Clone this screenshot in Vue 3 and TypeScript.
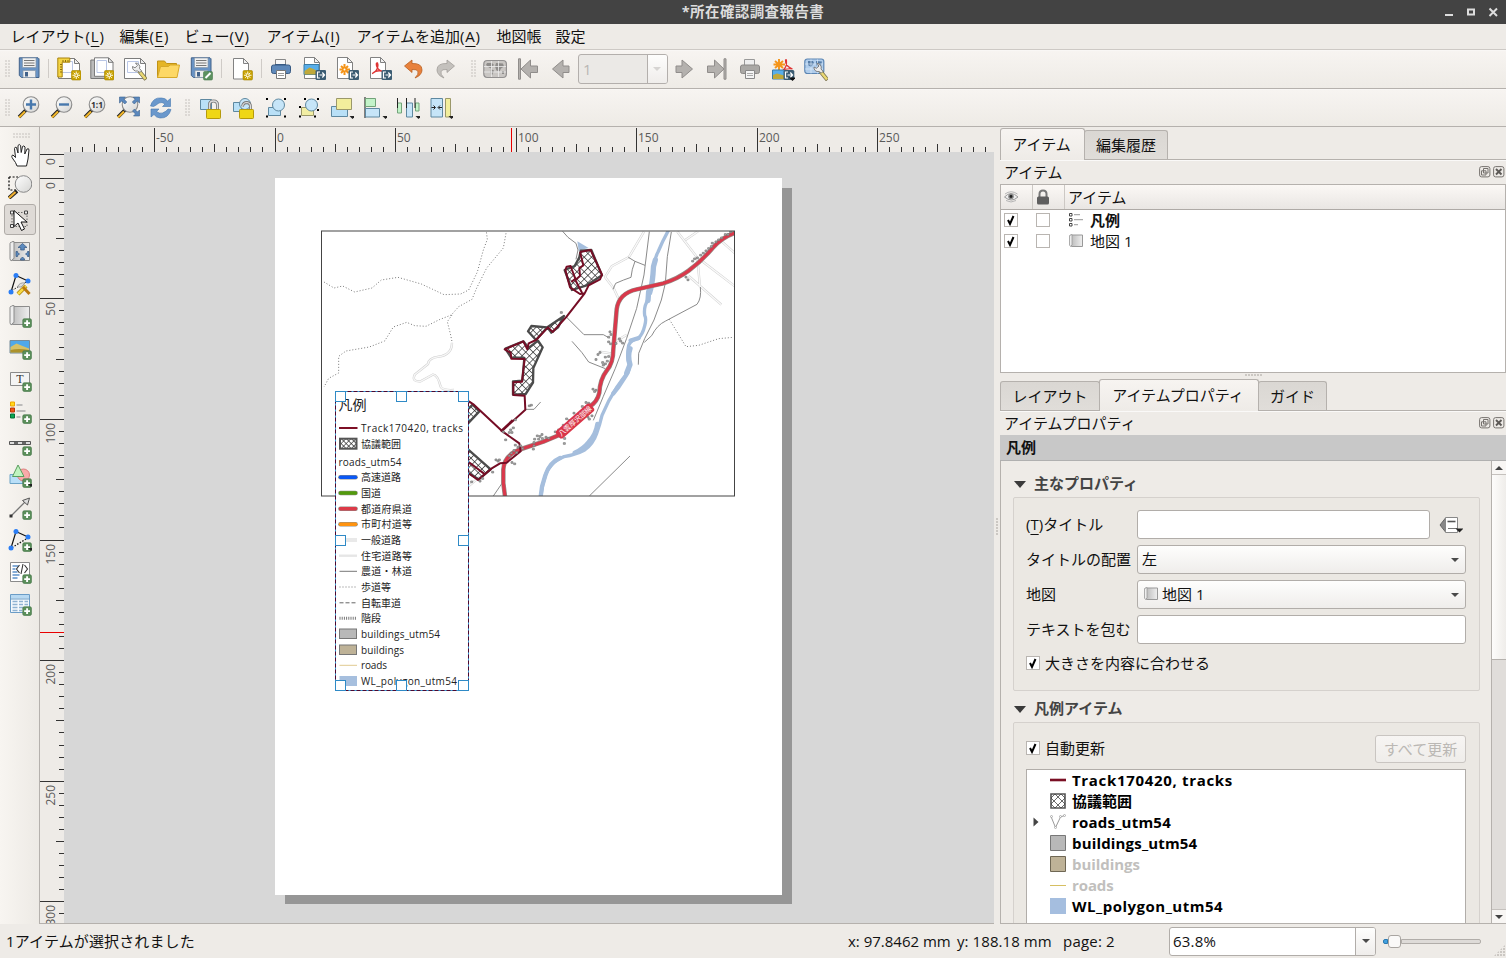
<script setup lang="ts">
interface Tool { icon?: string; kind?: 'sep' | 'grip' | 'page' }
interface Tick { pos: number; len: number; label?: string }
interface LegendRow { y: number; text: string; width: number; swatch: string; color?: string }

const menus = [
  { text: 'レイアウト', key: 'L', width: 109 },
  { text: '編集', key: 'E', width: 65 },
  { text: 'ビュー', key: 'V', width: 82 },
  { text: 'アイテム', key: 'I', width: 90 },
  { text: 'アイテムを追加', key: 'A', width: 140 },
  { text: '地図帳', key: '', width: 59 },
  { text: '設定', key: '', width: 40 },
]

const t = (icon: string): Tool => ({ icon })
const sep: Tool = { kind: 'sep' }
const grip: Tool = { kind: 'grip' }

const toolbarTop: Tool[] = [
  t('save'), sep, t('new-layout'), t('duplicate'), t('manager'), t('folder'), t('save-as'), sep,
  t('new-page'), sep, t('print'), t('export-image'), t('export-svg'), t('export-pdf'), t('undo'), t('redo'), grip,
  t('atlas'), t('first'), t('prev'), { kind: 'page' }, t('next'), t('last'), t('print-off'), t('atlas-export'), t('atlas-settings'),
]
const toolbarView: Tool[] = [
  t('zoom-in'), t('zoom-out'), t('zoom-actual'), t('zoom-full'), t('refresh'), grip,
  t('lock-items'), t('unlock-items'), t('group'), t('ungroup'), t('raise'), t('align'), t('distribute'), t('resize'),
]
const toolbox = ['pan', 'zoom', 'select', 'move-content', 'edit-nodes', 'add-map', 'add-image', 'add-label', 'add-legend',
  'add-scalebar', 'add-shape', 'add-arrow', 'add-nodes', 'add-html', 'add-table']

const hTicks: Tick[] = []
for (let i = -17; i <= 59; i++) {
  const major = i % 10 === 0
  hTicks.push({ pos: Math.floor(275 + i * 12.05), len: major ? 24 : i % 5 === 0 ? 8 : 5, label: major ? String(i * 5) : undefined })
}
const vTicks: Tick[] = []
for (let k = -2; k <= 61; k++) {
  const major = k % 10 === 0 || k === -2
  vTicks.push({ pos: Math.floor(178.2 + k * 12.06), len: major ? 24 : k % 5 === 0 ? 8 : 5, label: major ? String(Math.max(k, 0) * 5) : undefined })
}

const legend: LegendRow[] = [
  { y: 428, text: 'Track170420, tracks', width: 102, swatch: 'line', color: '#7d0f25' },
  { y: 443.7, text: '協議範囲', width: 40, swatch: 'hatch' },
  { y: 477.3, text: '高速道路', width: 40, swatch: 'road', color: '#0a58f5' },
  { y: 493, text: '国道', width: 20, swatch: 'road', color: '#529a0c' },
  { y: 508.7, text: '都道府県道', width: 51, swatch: 'road', color: '#dc3a48' },
  { y: 524.3, text: '市町村道等', width: 51, swatch: 'road', color: '#ff930f' },
  { y: 540, text: '一般道路', width: 40, swatch: 'pale', color: '#e9e9e9' },
  { y: 555.7, text: '住宅道路等', width: 51, swatch: 'pale2', color: '#e6e6e6' },
  { y: 571.3, text: '農道・林道', width: 51, swatch: 'thin', color: '#777' },
  { y: 587, text: '歩道等', width: 30, swatch: 'dots' },
  { y: 602.8, text: '自転車道', width: 40, swatch: 'dash' },
  { y: 618.3, text: '階段', width: 20, swatch: 'stairs' },
  { y: 634, text: 'buildings_utm54', width: 79, swatch: 'box', color: '#b8b8b8' },
  { y: 650, text: 'buildings', width: 43, swatch: 'box', color: '#beb297' },
  { y: 665.3, text: 'roads', width: 26, swatch: 'thin', color: '#e0ca90' },
  { y: 681, text: 'WL_polygon_utm54', width: 96, swatch: 'fill', color: '#a6bfde' },
]

const handles = [[335.5, 391.5], [396.5, 391.5], [458.5, 391.5], [335.5, 535.5], [458.5, 535.5], [335.5, 680.5], [396.5, 680.5], [458.5, 680.5]]

const houses: number[][] = [
  [812, 36], [804, 44], [796, 44], [785, 54], [776, 60], [768, 66], [757, 70], [754, 80], [746, 86], [738, 93], [730, 100], [722, 106],
  [712, 114], [704, 117], [698, 124], [678, 172], [684, 180], [450, 336], [453, 344], [446, 352], [446, 366], [452, 372], [468, 371],
  [482, 364], [488, 370], [478, 357], [420, 398], [414, 404], [408, 419], [436, 412], [446, 410], [428, 428], [436, 432], [442, 424],
  [430, 436], [399, 508], [404, 515], [408, 511], [378, 548], [386, 550], [367, 560], [396, 588], [384, 592], [388, 598], [342, 580],
  [320, 597], [328, 602], [310, 616], [296, 630], [286, 636], [314, 656], [313, 671], [266, 655], [258, 652], [246, 644], [240, 650],
  [232, 648], [236, 658], [224, 658], [222, 668], [222, 678], [220, 688], [247, 656], [160, 624], [152, 630], [156, 638], [148, 638],
  [130, 636], [137, 660], [166, 676], [174, 682], [182, 678], [188, 686], [162, 692], [154, 700], [148, 708], [170, 698], [156, 728],
  [164, 732], [108, 720], [114, 724], [118, 720], [98, 757], [68, 776], [60, 784], [35, 786], [166, 600], [208, 558], [214, 556], [304, 278],
]

const mainRoad = 'M826 38q-40 14-66 44-34 40-74 70-32 24-76 38l-80 18q-54 12-60 60l-10 120q0 42-20 64-20 26-22 66-6 28-30 42L298 645l-48 20-66 22q-52 18-54 62v40l5 40'
const pathLoop = 'M396 368q0 36-40 42-30 4-32 22l-40 32q-10 22 18 20l36-20q14-2 24 36 6 12 40 10'
const paleRoads = 'M552 35l-45 76-52 28-20 32 26 34 14 30M652 35l60 78 8 88M676 60l38-26M722 120l104 80M686 168l98 86M786 65l40 36M455 372l45-28M418 395l35 5M0 820l60-50'

const legendItems = [
  { text: 'Track170420, tracks', icon: 'sw-line', off: false, gap: 0.68 },
  { text: '協議範囲', icon: 'sw-hatch', off: false, gap: 0 },
  { text: 'roads_utm54', icon: 'sw-vector', off: false, gap: 0.22, expand: true },
  { text: 'buildings_utm54', icon: 'sw-grey', off: false, gap: 0.17 },
  { text: 'buildings', icon: 'sw-tan', off: true, gap: -0.05 },
  { text: 'roads', icon: 'sw-thin', off: true, gap: -0.1 },
  { text: 'WL_polygon_utm54', icon: 'sw-blue', off: false, gap: 0.5 },
]
</script>

<template>
  <div class="window">
    <svg class="sprites" width="0" height="0">
      <defs>
        <linearGradient id="g-lens" x1="0" y1="0" x2="1" y2="1"><stop offset="0" stop-color="#fff" /><stop offset="1" stop-color="#d4d4d2" /></linearGradient>
        <linearGradient id="g-roll" x1="0" y1="0" x2="1" y2="0"><stop offset="0" stop-color="#b9b9b9" /><stop offset="1" stop-color="#efefef" /></linearGradient>
        <pattern id="p-hatch" width="3.6" height="3.6" patternUnits="userSpaceOnUse" patternTransform="rotate(45)">
          <path d="M0 0H3.6M0 0V3.6" stroke="#222" stroke-width="1.2" fill="none" />
        </pattern>
        <pattern id="p-map" width="15.5" height="15.5" patternUnits="userSpaceOnUse" patternTransform="rotate(45)">
          <path d="M0 0H15.5M0 0V15.5" stroke="#222" stroke-width="4" fill="none" />
        </pattern>
        <g id="b-new">
          <rect x="14.5" y="13.5" width="9.500" height="9.500" rx="1.200" fill="#c8a202" stroke="#a58500" stroke-width=".6" />
          <path d="M19.250 14.500v7.500M15.500 18.250h7.500M16.700 15.700l5.100 5.100M21.800 15.700l-5.100 5.100" stroke="#fffbe0" stroke-width="1" /><circle cx="19.250" cy="18.250" r="1.400" fill="#c8a202" stroke="#fff" stroke-width=".8" />
        </g>
        <g id="b-export">
          <rect x="13.500" y="13" width="10.800" height="10" rx="1.500" fill="#3c5d73" />
          <path d="M18 15h-2.500v6H18M17.500 18h4.800M20.300 15.500l2.300 2.500-2.300 2.500" stroke="#fff" stroke-width="1.200" fill="none" />
        </g>
        <g id="b-plus">
          <rect x="14.800" y="14.800" width="8.600" height="8.600" rx="1.400" fill="#5b8f5b" stroke="#47784a" stroke-width=".7" />
          <path d="M19.100 16.200v5.800M16.200 19.100H22" stroke="#fff" stroke-width="1.900" />
        </g>
        <g id="b-drop"><path d="M17.500 19.500h6l-3 3z" fill="#222" /></g>
        <g id="s-wide"><path d="M1.500 1.500h16l5 5v15h-21z" fill="#fff" stroke="#7c7c7c" /><path d="M4.500 4.500h11v11h-11z" fill="#fdfdff" stroke="#b9c6e6" /><path d="M17.500 1.500v5h5z" fill="#eee" stroke="#7c7c7c" /></g>
        <g id="s-doc"><path d="M2.500 .5h10l5 5v16h-15z" fill="#fff" stroke="#828282" /><path d="M12.500 .5v5h5z" fill="#f1f1f1" stroke="#828282" /></g>
        <g id="s-lens">
          <path d="M9.500 13.500L2 21" stroke="#222" stroke-width="3.600" /><path d="M8 15.500L2 21.500" stroke="#f0b52a" stroke-width="2.200" />
          <circle cx="14" cy="8.500" r="7.800" fill="url(#g-lens)" stroke="#8b8b8b" stroke-width="1.100" />
        </g>
        <g id="s-wrench">
          <path d="M15 13l7 8.500" stroke="#77704c" stroke-width="4" /><path d="M15 13l6.500 8" stroke="#ead873" stroke-width="2.600" />
          <path d="M8.500 8.500a4 4 0 0 0 5 4.500l2.500 1.500 1.500-1.700-2-2.300a4 4 0 0 0-4-5.500l2 2.500-2.500 2.300z" fill="#ececec" stroke="#6a6a6a" stroke-width=".8" />
        </g>
        <g id="s-roll">
          <path d="M2.500 2.500h19v18h-17z" fill="url(#g-roll)" stroke="#8c8c8c" /><path d="M2 3.500q1.500-2.500 4-2v17q-1.500 0-2 2.200-2 .3-2-2z" fill="#eee" stroke="#8c8c8c" />
        </g>
        <g id="s-nodes"><circle cx="8" cy="3.500" r="2.500" fill="#2a7df5" /><circle cx="20" cy="9" r="2.500" fill="#2a7df5" /><circle cx="3" cy="20" r="2.500" fill="#2a7df5" /></g>
      </defs>

      <symbol id="save" viewBox="0 0 24 24">
        <path d="M3 .8h18l1 1v18.700H4.500L2.300 18.500V.8z" fill="#6993c4" stroke="#42628a" /><path d="M5.500 1h13.500v9.500H5.500z" fill="#f1f1f1" stroke="#8698aa" stroke-width=".7" /><path d="M7 3.500h10.500M7 6h10.500M7 8.500h10.500" stroke="#777" /><path d="M6 13.500h12.500v7H6z" fill="#eee" stroke="#8698aa" stroke-width=".7" /><path d="M8 15h3v4.500H8z" fill="#42628a" />
      </symbol>
      <symbol id="new-layout" viewBox="0 0 24 24"><use href="#s-wide" /><path d="M.8 1h12v4.200H5.200V20H.8z" fill="#f5d545" stroke="#a9830c" /><path d="M3 7.500h2M3 10h2M3 12.500h2M3 15h2M6 3v2M8.500 3v2M11 3v2" stroke="#8c6d0c" /><use href="#b-new" /></symbol>
      <symbol id="duplicate" viewBox="0 0 24 24"><path d="M.8 3h16v18.500h-16z" fill="#bbb" stroke="#777" /><path d="M4.500 .8h14l4.500 4.500v14h-18.500z" fill="#fff" stroke="#7c7c7c" /><path d="M7 3.500h9.500v12H7z" fill="none" stroke="#b9c6e6" /><path d="M18.500 .8v4.500H23z" fill="#eee" stroke="#777" /><use href="#b-new" /></symbol>
      <symbol id="manager" viewBox="0 0 24 24"><use href="#s-wide" /><use href="#s-wrench" x="1" y="1" /></symbol>
      <symbol id="folder" viewBox="0 0 24 24"><path d="M1.500 20.500V4h7l2 2.500h10v14z" fill="#e5b526" stroke="#c09216" /><path d="M1.500 20.500l3-11h8l1.500-1.500h9.500l-2.500 12.500z" fill="#fdd866" stroke="#d7a92a" /></symbol>
      <symbol id="save-as" viewBox="0 0 24 24"><use href="#save" width="24" height="24" /><rect x="14.500" y="14.500" width="9" height="8.500" rx="1.200" fill="#5c9160" stroke="#477a4c" stroke-width=".6" /><path d="M16.500 21l5-5" stroke="#fff" stroke-width="2" /></symbol>
      <symbol id="new-page" viewBox="0 0 24 24"><path d="M4.500 1.500h10l5 5v15.500h-15z" fill="#fff" stroke="#828282" /><path d="M14.500 1.500v5h5z" fill="#f1f1f1" stroke="#828282" /><use href="#b-new" x="-.5" /></symbol>
      <symbol id="print" viewBox="0 0 24 24"><path d="M6.500 2.500h10v6h-10z" fill="#f8f8f8" stroke="#888" /><rect x="2.500" y="8" width="19" height="8.500" rx="2" fill="#5e88b9" stroke="#385a83" /><path d="M6 7.500h11" stroke="#385a83" /><path d="M7.500 13.500h9v8h-9z" fill="#fff" stroke="#777" /><path d="M9 16.500h6M9 18.500h6" stroke="#999" /></symbol>
      <symbol id="export-image" viewBox="0 0 24 24"><use href="#s-doc" /><path d="M2 7.500h15v10H2z" fill="#58aeea" stroke="#397ba5" /><path d="M2.500 14l5-3.500 4 1.500 5 3v2.500h-14z" fill="#c0a93a" /><use href="#b-export" /></symbol>
      <symbol id="export-svg" viewBox="0 0 24 24"><use href="#s-doc" /><path d="M9.500 7v11M4.500 12.500h10.500M6 9l7.500 7M13 9l-7 7" stroke="#f49419" stroke-width="2" /><circle cx="9.500" cy="12.500" r="1" fill="#fff" /><use href="#b-export" /></symbol>
      <symbol id="export-pdf" viewBox="0 0 24 24"><use href="#s-doc" /><path d="M4 16.500q3.500-1 5.500-5.500 1-3 0-5 -2-.5-.5 4 2 4 6 4.500M5 16q3-3 9-2" stroke="#df3434" stroke-width="1.400" fill="none" /><use href="#b-export" /></symbol>
      <symbol id="undo" viewBox="0 0 24 24"><path d="M3.500 9L11 3v3.500q10-.5 10 6.500 0 5-7 8 4-4 3-6.500-1-2.500-6-2V15.500z" fill="#e8813c" stroke="#b95e20" stroke-width=".8" /></symbol>
      <symbol id="redo" viewBox="0 0 24 24"><path d="M20.500 9L13 3v3.500Q3 6 3 13q0 5 7 8-4-4-3-6.500 1-2.500 6-2V15.500z" fill="#c4c1bd" stroke="#a19d99" stroke-width=".8" /></symbol>
      <symbol id="atlas" viewBox="0 0 24 24"><rect x=".8" y="3.500" width="22.600" height="17" rx="3.500" fill="#c9c6c3" stroke="#929090" stroke-width="1.200" /><path d="M4 6h5l2 2-2 1.500-1 2-2-1-3-2.500zM8 12l3 1.500-2 5-1.500-3zM13 6l7 .5 1 3-3 2-1.500 3-3-1-1.500-4zM19 14h2v3h-2z" fill="#8e8c8a" /><path d="M8.500 4v16M15.500 4v16M1 9.500h22M1 15h22" stroke="#eee" stroke-width=".8" /></symbol>
      <symbol id="next" viewBox="0 0 24 24"><path d="M4 9h6V3l10.500 9L10 21v-5.500H4z" fill="#b4b1ae" stroke="#908d8b" /></symbol>
      <symbol id="prev" viewBox="0 0 24 24"><path d="M20 9h-6V3L3.500 12 14 21v-5.500h6z" fill="#b4b1ae" stroke="#908d8b" /></symbol>
      <symbol id="last" viewBox="0 0 24 24"><path d="M2.500 9h7V3L19 12l-9.500 9v-5.500h-7zM19 1.800h2v20.400h-2z" fill="#b4b1ae" stroke="#908d8b" /></symbol>
      <symbol id="first" viewBox="0 0 24 24"><path d="M21.500 9h-7V3L5 12l9.500 9v-5.500h7zM2.500 1.800h2v20.400h-2z" fill="#b4b1ae" stroke="#908d8b" /></symbol>
      <symbol id="print-off" viewBox="0 0 24 24"><path d="M6.500 2.500h10v6h-10z" fill="#eee" stroke="#999" /><rect x="2.500" y="8" width="19" height="8.500" rx="2" fill="#aaa8a5" stroke="#8a8886" /><path d="M7.500 13.500h9v8h-9z" fill="#f4f4f4" stroke="#888" /><path d="M9 16.500h6M9 18.500h6" stroke="#aaa" /></symbol>
      <symbol id="atlas-export" viewBox="0 0 24 24"><path d="M8 2v11M2.500 7.500H14M4 4l8 7M12 4l-8 7" stroke="#f49419" stroke-width="1.900" /><path d="M12 13q4-3 3.500-9 0-2-1-1-.5 6 7 9-6-1-11 2" stroke="#df3434" stroke-width="1.200" fill="none" /><path d="M1.500 13h12v9h-12z" fill="#58aeea" stroke="#397ba5" /><path d="M2 18l4-1.500 7 2V22H2z" fill="#c0a93a" /><use href="#b-export" x="-1" /><path d="M18 20.500h7l-3.500 3.500z" fill="#111" /></symbol>
      <symbol id="atlas-settings" viewBox="0 0 24 24"><rect x=".8" y="2" width="19" height="14.500" rx="2.500" fill="#b0cdec" stroke="#5c86b4" stroke-width="1.200" /><path d="M4 4h5l1 2-3 4-3-2zM12 4l6 .5-1 4-3 2-2-3z" fill="#567da8" /><path d="M7 2.500v14M13.500 2.500v14M1 7h18M1 12h18" stroke="#dcebf8" stroke-width=".7" /><use href="#s-wrench" x="1.500" y="1.500" /></symbol>

      <symbol id="zoom-in" viewBox="0 0 24 24"><use href="#s-lens" /><path d="M14 3.500v10M9 8.500h10" stroke="#4778ad" stroke-width="2.400" /></symbol>
      <symbol id="zoom-out" viewBox="0 0 24 24"><use href="#s-lens" /><path d="M9 8.500h10" stroke="#4778ad" stroke-width="2.400" /></symbol>
      <symbol id="zoom-actual" viewBox="0 0 24 24"><use href="#s-lens" /></symbol>
      <symbol id="zoom-full" viewBox="0 0 24 24"><use href="#s-lens" /><path d="M3.500 1h6L7.800 3l3 3-2 2-3-3L3.500 7zM23.500 1v6l-2.200-2-3 3-2-2 3-3-2-2zM23.500 20h-6l2-2-3-3 2-2 3 3 2-2z" fill="#5b88bd" stroke="#3a618f" stroke-width=".6" /></symbol>
      <symbol id="refresh" viewBox="0 0 24 24"><path d="M1.500 10Q4 1 12.500 2q4 0 6 3l3-2.500v8h-8l2.500-2.500q-3-2.500-6-1Q6 10 4.500 10.500zM22 13.500Q19.500 22.500 11 22q-4-.5-6-3.500L2 21v-8h8L7.500 15.500q3 2.500 6 1.500 4-1.500 5.500-4z" fill="#6a98cc" stroke="#4377b0" stroke-width=".6" /></symbol>
      <symbol id="lock-items" viewBox="0 0 24 24"><path d="M2.500 3.500h11v10h-11z" fill="#b9e0f7" stroke="#5e88a0" /><path d="M11.500 13V9q0-4 4-4t4 4v4" fill="none" stroke="#777" stroke-width="3" /><path d="M11.500 13V9q0-4 4-4t4 4v4" fill="none" stroke="#ddd" stroke-width="1.400" /><rect x="8.500" y="13.500" width="14" height="9" rx=".8" fill="#efd716" stroke="#b59a0c" /></symbol>
      <symbol id="unlock-items" viewBox="0 0 24 24"><path d="M2.500 6.500h8v9h-8z" fill="#b9e0f7" stroke="#5e88a0" /><circle cx="14" cy="8" r="5.500" fill="#c6e5f8" stroke="#5e88a0" /><path d="M11.500 10.500q.5-4 4.500-4 3.500.5 3.500 4v3" fill="none" stroke="#777" stroke-width="2.800" /><path d="M11.500 10.500q.5-4 4.500-4 3.500.5 3.500 4v3" fill="none" stroke="#ddd" stroke-width="1.200" /><rect x="8.500" y="13.500" width="14" height="9" rx=".8" fill="#efd716" stroke="#b59a0c" /></symbol>
      <symbol id="group" viewBox="0 0 24 24"><path d="M4.500 11.500h12v8h-12z" fill="#b9e0f7" stroke="#5e88a0" /><circle cx="14.500" cy="9" r="6" fill="#c6e5f8" stroke="#5e88a0" /><path d="M2 2h2v2H2zM20 2h2v2h-2zM2 19.500h2v2H2zM20 19.500h2v2h-2z" fill="#000" /></symbol>
      <symbol id="ungroup" viewBox="0 0 24 24"><path d="M4.500 11.500h12v8h-12z" fill="#f2eea4" stroke="#9b986a" /><circle cx="14.500" cy="9" r="6" fill="#c6e5f8" stroke="#5e88a0" /><path d="M7 2h2v2H7zM20 2h2v2h-2zM2 10h2v2H2zM2 19.500h2v2H2zM17 19.500h2v2h-2zM20 13h2v2h-2z" fill="#000" /></symbol>
      <symbol id="raise" viewBox="0 0 24 24"><path d="M1.500 10.500h16v10h-16z" fill="#b9e0f7" stroke="#5e88a0" /><path d="M6.500 2.500h15v11h-15z" fill="#f2ee9c" stroke="#9b986a" /><use href="#b-drop" x="2" y=".5" /></symbol>
      <symbol id="align" viewBox="0 0 24 24"><path d="M2 1v21" stroke="#111" /><path d="M2.500 2.500h10v8h-10z" fill="#c3f3c9" stroke="#73a37a" /><path d="M2.500 12.500h14v8.500h-14z" fill="#c6e5f8" stroke="#5e88a0" /><use href="#b-drop" x="2" y=".5" /></symbol>
      <symbol id="distribute" viewBox="0 0 24 24"><path d="M1.500 7h4v10h-4zM19.500 7h3.500v8h-3.500z" fill="#c3f3c9" stroke="#73a37a" /><path d="M10.500 7h6v14h-6z" fill="#c6e5f8" stroke="#5e88a0" /><path d="M1.500 2v10M10.500 2v10M19 2v10" stroke="#222" /><use href="#b-drop" x="2" y=".5" /></symbol>
      <symbol id="resize" viewBox="0 0 24 24"><path d="M2 2.500h11.500V21H2z" fill="#c6e5f8" stroke="#5e88a0" /><path d="M16.500 2.500h5V21h-5z" fill="#f2ee9c" stroke="#9b986a" /><path d="M2.500 11.500H6M4.500 9.500l2 2-2 2M13 11.500H9.500M11 9.500l-2 2 2 2" stroke="#222" fill="none" /><use href="#b-drop" x="2" y=".5" /></symbol>

      <symbol id="pan" viewBox="0 0 24 24"><path d="M9 23q-1-3.500-4-7Q2.500 12.500 5 12l2.500 2.500-1-9q.3-2 2-1L10 10V2.500q1.200-2 2.600 0l.6 7 1.300-6q1.500-1.500 2.500.5L16.800 11 19 6q2-1 2 1l-1 9-1.500 7z" fill="#fff" stroke="#222" /></symbol>
      <symbol id="zoom" viewBox="0 0 24 24"><path d="M1 2h9M1 2v13h8" stroke="#000" stroke-width="1.200" stroke-dasharray="2 1.600" fill="none" /><path d="M9 16l-8 7" stroke="#222" stroke-width="3.800" /><path d="M7.500 17l-6.500 6" stroke="#efae2d" stroke-width="2.200" /><circle cx="15.500" cy="9" r="8.300" fill="url(#g-lens)" stroke="#888" /></symbol>
      <symbol id="select" viewBox="0 0 24 24"><g transform="translate(0 1)"><path d="M4 3.500h15v14H4z" fill="none" stroke="#666" stroke-dasharray="1.500 1.500" /><path d="M2.500 2h3v3h-3zM16.500 2h3v3h-3zM2.500 15.500h3v3h-3z" fill="#eee" stroke="#444" /><path d="M6 1.500v16l4-3.500 3.500 7.500 3-1.500-3.500-7h6z" fill="#fff" stroke="#111" /></g></symbol>
      <symbol id="move-content" viewBox="0 0 24 24"><use href="#s-roll" /><path d="M14.500 3.500l4.500 4h-2.700V10h-3.600V7.500H10zM8 11.500h1.500v1l2 1.500-2 1.500v1H8zM21 11.500v5h-1.500v-1l-2-1.500 2-1.500v-1zM12.500 20v-1l2-2 2 2v1z" fill="#5b8abf" stroke="#32557f" stroke-width=".7" /></symbol>
      <symbol id="edit-nodes" viewBox="0 0 24 24"><path d="M20 9L8 3.500 3 20" fill="none" stroke="#111" stroke-width="1.200" /><path d="M4 18.500L18 10" stroke="#111" stroke-dasharray="1.500 1.500" /><use href="#s-nodes" /><path d="M10 22l8-8" stroke="#a17c06" stroke-width="4" /><path d="M10 22l8-8" stroke="#f7d943" stroke-width="2.600" /><path d="M15 15l6.500 7" stroke="#bb790f" stroke-width="3" /><path d="M9.500 15q2-5 7.500-4l-4 4z" fill="#ddd" stroke="#888" stroke-width=".7" /></symbol>
      <symbol id="add-map" viewBox="0 0 24 24"><use href="#s-roll" /><use href="#b-plus" /></symbol>
      <symbol id="add-image" viewBox="0 0 24 24"><path d="M2 4.500h19.500V17H2z" fill="#4fa8ea" stroke="#758a99" /><path d="M2.500 11l6-3.500 6 2.500 6.500 2.500v4H2.500z" fill="#d6c168" /><path d="M2.500 14q8-2 18.500 0v2.500H2.500z" fill="#ad922c" /><use href="#b-plus" /></symbol>
      <symbol id="add-label" viewBox="0 0 24 24"><path d="M2.500 4.500h19v13h-19z" fill="#f4f4f4" stroke="#8b8b8b" /><use href="#b-plus" /></symbol>
      <symbol id="add-legend" viewBox="0 0 24 24"><path d="M2.500 2h4v4h-4z" fill="#ffd81b" stroke="#f0a400" /><path d="M2.500 8h4v4h-4z" fill="#f45315" stroke="#b83807" /><path d="M2.500 14h4v4h-4z" fill="#0aa651" stroke="#047035" /><path d="M8.500 5h6M8.500 11h9M8.500 17h4" stroke="#aaa" stroke-width="1.600" /><use href="#b-plus" /></symbol>
      <symbol id="add-scalebar" viewBox="0 0 24 24"><path d="M1.500 9.500h21v3h-21z" fill="#ddd" stroke="#555" /><path d="M6 11h4M14 11h4" stroke="#666" stroke-width="2" /><use href="#b-plus" /></symbol>
      <symbol id="add-shape" viewBox="0 0 24 24"><path d="M2 10.500h13v9H2z" fill="#b9dff8" stroke="#6ba3c6" /><circle cx="15.500" cy="11" r="6" fill="#f8aaa9" stroke="#dc7d7c" /><path d="M10 1L4.500 12.500H16z" fill="#c0f3c0" stroke="#5a9e5e" /><use href="#b-plus" /><use href="#b-drop" x="2.500" y=".5" /></symbol>
      <symbol id="add-arrow" viewBox="0 0 24 24"><path d="M3 20L17 6" stroke="#777" stroke-width="1.300" /><path d="M1.500 18.500h3v3h-3z" fill="#333" /><path d="M21.500 2l-2 7-5-4.500z" fill="#ddd" stroke="#555" /><use href="#b-plus" /></symbol>
      <symbol id="add-nodes" viewBox="0 0 24 24"><path d="M20 9L8 3.500 3 20" fill="none" stroke="#111" stroke-width="1.200" /><path d="M4 19.500L19 10.500" stroke="#111" stroke-width="1.300" stroke-dasharray="1.500 1.500" /><use href="#s-nodes" /><use href="#b-plus" /><use href="#b-drop" x="2.500" y=".5" /></symbol>
      <symbol id="add-html" viewBox="0 0 24 24"><path d="M2.500 2.500h19v19h-19z" fill="#fff" stroke="#8b8b8b" /><path d="M4.500 6h6M4.500 9h3M4.500 12h5M4.500 15h7M4.500 18h5" stroke="#5e91c9" stroke-width="1.500" /><path d="M11.500 5L8.500 9l3 4M15 4l-2 10M16.500 5l3 4-3 4" fill="none" stroke="#333" stroke-width="1.100" /><use href="#b-plus" /></symbol>
      <symbol id="add-table" viewBox="0 0 24 24"><path d="M2.500 2.500h19v18h-19z" fill="#f6fafd" stroke="#6b9cc6" /><path d="M3 3h18v3.500H3z" fill="#b8d9f2" /><path d="M2.500 7h19" stroke="#6b9cc6" /><path d="M4.500 9.500h5M11 9.500h4M16.500 9.500h3.500M4.500 12.500h5M11 12.500h4M16.500 12.500h3.500M4.500 15.500h5M11 15.500h4M4.500 18.500h5M11 18.500h3" stroke="#8fb2d2" stroke-width="1.300" /><use href="#b-plus" /></symbol>

      <symbol id="legend-small" viewBox="0 0 16 16"><path d="M1.500 1.500h2.500v2.500h-2.500zM1.500 6.500h2.500v2.500h-2.500zM1.500 11.500h2.500v2.500h-2.500z" fill="#fff" stroke="#444" /><path d="M6 2.700h6M6 7.700h9M6 12.700h4" stroke="#aaa" stroke-width="1.300" /></symbol>
      <symbol id="map-small" viewBox="0 0 16 16"><path d="M2.500 2h12v11.500h-11z" fill="url(#g-roll)" stroke="#999" /><path d="M1.500 2.500L4 1.500v10.500l-1.500 1.500-1-1.500z" fill="#eee" stroke="#999" stroke-width=".8" /></symbol>
      <symbol id="sw-line" viewBox="0 0 16 16"><path d="M0 8h16" stroke="#7a0f24" stroke-width="2.600" /></symbol>
      <symbol id="sw-hatch" viewBox="0 0 16 16"><path d="M1 1h14v14H1z" fill="#fff" stroke="#555" stroke-width="1.600" /><path d="M1 5l10 10M1 11l4 4M5 1l10 10M11 1l4 4M11 1L1 11M5 1L1 5M15 5L5 15M15 11l-4 4" stroke="#444" stroke-width=".8" /></symbol>
      <symbol id="sw-vector" viewBox="0 0 16 16"><path d="M1 2.500l4.500 11 5-10.500 4-1.500" stroke="#999" fill="none" /><g fill="#fff" stroke="#999" stroke-width=".7"><circle cx="1.500" cy="2.500" r="1" /><circle cx="5.500" cy="13.500" r="1" /><circle cx="10.500" cy="2.500" r="1" /><circle cx="14.500" cy="1.500" r="1" /></g></symbol>
      <symbol id="sw-grey" viewBox="0 0 16 16"><path d="M.5 .5h15v15H.5z" fill="#b8b8b8" stroke="#777" /></symbol>
      <symbol id="sw-tan" viewBox="0 0 16 16"><path d="M.5 .5h15v15H.5z" fill="#beb297" stroke="#6f6754" /></symbol>
      <symbol id="sw-thin" viewBox="0 0 16 16"><path d="M0 8.500h16" stroke="#d6bf62" /></symbol>
      <symbol id="sw-blue" viewBox="0 0 16 16"><path d="M0 0h16v16H0z" fill="#a5bedf" /></symbol>
      <symbol id="dock-float" viewBox="0 0 12 12"><rect x=".6" y=".6" width="10.300" height="10.300" rx="2" fill="none" stroke="#77736f" /><path d="M4.500 2.500h4.500V7H4.500zM2.500 4.800H7v4.200H2.500z" fill="#eeebe7" stroke="#77736f" /></symbol>
      <symbol id="dock-close" viewBox="0 0 12 12"><rect x=".6" y=".6" width="10.300" height="10.300" rx="2" fill="none" stroke="#77736f" /><path d="M3 3l5.500 5.500M8.500 3L3 8.500" stroke="#5c5956" stroke-width="1.900" /></symbol>
    </svg>

    <header class="titlebar">
      <span>*所在確認調査報告書</span>
      <svg class="wm" width="60" height="24" viewBox="0 0 60 24"><path d="M4 15h8" stroke="#ddd" stroke-width="2" /><path d="M27 9.500h6v5h-6z" fill="none" stroke="#ddd" stroke-width="2" /><path d="M48.500 8.500l7.500 7.500M56 8.500L48.500 16" stroke="#ddd" stroke-width="2" /></svg>
    </header>

    <nav class="menubar">
      <div v-for="m in menus" :key="m.text" class="menu" :style="{ width: m.width + 'px' }">
        {{ m.text }}<span v-if="m.key" class="accel">(<u>{{ m.key }}</u>)</span>
      </div>
    </nav>

    <div v-for="(bar, bi) in [toolbarTop, toolbarView]" :key="bi" class="toolbar" :class="'bar' + bi">
      <i class="grip lead"></i>
      <template v-for="(item, i) in bar" :key="i">
        <i v-if="item.kind === 'sep'" class="sep"></i>
        <i v-else-if="item.kind === 'grip'" class="grip mid"></i>
        <div v-else-if="item.kind === 'page'" class="pagebox"><span>1</span><b><i class="arrow pale"></i></b></div>
        <div v-else class="tool">
          <svg width="24" height="24"><use :href="'#' + item.icon" /><text v-if="item.icon === 'zoom-actual'" class="ratio" x="14" y="12" text-anchor="middle">1:1</text></svg>
        </div>
      </template>
    </div>

    <main class="body">
      <aside class="toolbox">
        <i class="hgrip"></i>
        <div v-for="name in toolbox" :key="name" class="slot">
          <div class="btn" :class="{ on: name === 'select' }">
            <svg width="24" height="24"><use :href="'#' + name" /><text v-if="name === 'add-label'" class="serif-t" x="12" y="15" text-anchor="middle">T</text></svg>
          </div>
        </div>
      </aside>

      <section class="view">
        <svg width="954" height="796" viewBox="40 127 954 796">
          <defs>
            <clipPath id="c-map"><rect x="322" y="231" width="413" height="265" /></clipPath>
          </defs>
          <rect x="64" y="152" width="930" height="771" fill="#d7d7d7" />
          <g class="ticks">
            <template v-for="k in hTicks" :key="k.pos">
              <rect :x="k.pos" :y="152 - k.len" width="1" :height="k.len" />
              <text v-if="k.label" :x="k.pos + 2" y="142">{{ k.label }}</text>
            </template>
            <template v-for="k in vTicks" :key="k.pos">
              <rect :x="64 - k.len" :y="k.pos" :width="k.len" height="1" />
              <text v-if="k.label" :transform="`translate(54.500 ${k.pos + 4}) rotate(-90)`" text-anchor="end">{{ k.label }}</text>
            </template>
          </g>
          <path d="M511.500 128v24M40 632.500h24" stroke="#e80000" />

          <rect x="285" y="188" width="507" height="716" fill="#969696" />
          <rect x="275" y="178" width="507" height="717" fill="#fff" />

          <g clip-path="url(#c-map)">
            <g transform="translate(320 220) scale(.33333)" fill="none" stroke-linejoin="round">
              <g stroke="#777" stroke-width="3" stroke-dasharray="3 6">
                <path d="M12 186l30 18 26-6 36 18 52-12 28-24 50-8 70 20 34 16 34 16 50-2 24-12 26-54 18-66 12-32-4-32" />
                <path d="M558 40l-8 44-50 60-30 60-14 34-40 22-22 25-36 14-40 20-34-2-24-10-40 14-26 42-46 18-70 12-22 16v50l-30 16-14 26" />
                <path d="M396 285l-14 20 10 40 4 20" />
              </g>
              <path :d="pathLoop" stroke="#cfcfcf" stroke-width="7" /><path :d="pathLoop" stroke="#f7f7f7" stroke-width="4" />
            </g>
            <g transform="translate(460 220) scale(.33333)" fill="none" stroke-linejoin="round">
              <path :d="paleRoads" stroke="#d0d0d0" stroke-width="7" />
              <path :d="paleRoads" stroke="#fafafa" stroke-width="4" />
              <g stroke="#a5bedd" stroke-linecap="round">
                <path d="M626 30q-18 32-32 66-12 22-14 62-2 34-10 60-6 20-14 38-4 14-2 30 6 10 0 32-6 26-20 38-20 2-28 20-4 20-2 42 8 22 0 40-16 18-34 44-26 40-44 84-6 26-16 54-10 30-36 50-26 14-62 20-38 14-54 50-12 36-16 72" stroke-width="10" />
                <path d="M586 120q-8 20-7 42-3 34-10 56M566 214l-2 28M510 386q-8 22 0 48l-10 26" stroke-width="16" />
                <path d="M512 362l24-8M498 466l-22 34-16 20M412 612q-4 30-26 54-16 20-42 32M300 714q-32 14-44 52l-10 34-4 30" stroke-width="13" />
              </g>
              <path d="M352 64l34 20-16 4-14 4z" fill="#a5bedd" />
              <g stroke="#777" stroke-width="2.600">
                <path d="M308 34l16 18 24 18 6 20-6 28M568 35l-16 130-22 100-30 90-34 90-36 84-30 72M634 36l-12 74-6 80-12 50-22 60-28 56-18 44-1 34M553 367l22-20q16-32 42-44l94-50q14-18 10-52M318 290l54 54h58l18 10M336 364l30 34 20 28 50 20M505 112l20 12 30 12M525 124l-8 24-4 24-22 8-24 10-8 18M388 828l122-120M196 568h26l20-22M100 828l26-38" />
                <path d="M628 298l50 82 38-4 60-20 44-4" stroke-width="3" stroke-dasharray="3 6" />
              </g>
              <g fill="url(#p-map)" stroke="#4b4b4b" stroke-width="7">
                <path d="M362 92l32-2 32 76-46 30-44 14-22-60 30-12 14-26z" />
                <path d="M214 318l48 4 50-34-18 34-20 16-12-16-34 38-24-26z" />
                <path d="M136 386l54-22 16 20 28-22 14 20-28 62-1 44-22 34-38 2v-40l28-2 6-68-40-2z" />
                <path d="M24 688l68 60-36 30-40-24zM0 590l38-36 20 20-34 36z" />
              </g>
              <path d="M360 96l32-6 34 74-6 14-34 18-12 24-14 2-30-20-14-52 4-10 12-2 4 12 10 26-12 10M360 96l10 40-12 8 2 24-14 12 20 38M374 220l-56 72-40 44-14-14-36 38-22 10-4 18-12-24-56 24 18 10 2 18 40 1-8 68-26 2v38l34 2 2 42-70 64-86-80-12-8-26 32M26 726l50 38" stroke="#750d25" stroke-width="6" />
              <path :d="mainRoad" stroke="#948b86" stroke-width="13.500" />
              <path :d="mainRoad" stroke="#da384b" stroke-width="9.500" />
              <path d="M158 600l-34 32 54 38 4 24-42 34-20 2-26 16-40 34-50-36" stroke="#750d25" stroke-width="6" />
              <g fill="#b4b4b4" stroke="#777" stroke-width="2.200"><rect v-for="(p, i) in houses" :key="i" :x="p[0] - 3" :y="p[1] - 3" width="6" height="5" /></g>
              <g transform="translate(345 603) rotate(-41)">
                <rect x="-68" y="-15" width="136" height="30" rx="9" fill="#d93549" />
                <text class="road-name" x="-62" y="8" textLength="124">八雲厚沢部線</text>
              </g>
            </g>
          </g>
          <rect x="321.500" y="231" width="413" height="265" fill="none" stroke="#444" />

          <rect x="335.500" y="391.500" width="133" height="299" fill="#fff" stroke="#3aa4dc" />
          <text class="lg-title" x="338.500" y="410" textLength="28">凡例</text>
          <text class="lg" x="338.500" y="466" textLength="63">roads_utm54</text>
          <g v-for="row in legend" :key="row.text">
            <text class="lg" x="361" :y="row.y + 4" :textLength="row.width">{{ row.text }}</text>
            <path v-if="row.swatch === 'line'" :d="`M339 ${row.y}h18.500`" :stroke="row.color" stroke-width="2" />
            <g v-else-if="row.swatch === 'hatch'"><rect x="340" :y="row.y - 5" width="16.500" height="10" fill="url(#p-hatch)" stroke="#555" stroke-width="2" /></g>
            <g v-else-if="row.swatch === 'road'" stroke-linecap="round"><path :d="`M340.500 ${row.y}h15`" stroke="#8d8d88" stroke-width="4.600" /><path :d="`M340.500 ${row.y}h15`" :stroke="row.color" stroke-width="3.500" /></g>
            <path v-else-if="row.swatch === 'pale'" :d="`M339 ${row.y}h18`" :stroke="row.color" stroke-width="4" />
            <path v-else-if="row.swatch === 'pale2'" :d="`M339 ${row.y}h18`" :stroke="row.color" stroke-width="2.400" />
            <path v-else-if="row.swatch === 'thin'" :d="`M339.500 ${row.y}h17.500`" :stroke="row.color" stroke-width="1" />
            <path v-else-if="row.swatch === 'dots'" :d="`M339.500 ${row.y}h17`" stroke="#777" stroke-width="1" stroke-dasharray="1 2" />
            <path v-else-if="row.swatch === 'dash'" :d="`M339.500 ${row.y}h17`" stroke="#666" stroke-width="1" stroke-dasharray="4 2" />
            <path v-else-if="row.swatch === 'stairs'" :d="`M339.500 ${row.y}h16.500`" stroke="#777" stroke-width="3" stroke-dasharray="1 1.200" />
            <rect v-else-if="row.swatch === 'box'" x="339.500" :y="row.y - 5" width="17" height="9.500" :fill="row.color" stroke="#777" />
            <rect v-else x="339.500" :y="row.y - 5" width="17.500" height="10" :fill="row.color" />
          </g>
          <rect x="335.500" y="391.500" width="133" height="299" fill="none" stroke="#4d0830" stroke-dasharray="4 2" />
          <rect v-for="(h, i) in handles" :key="i" :x="h[0]" :y="h[1]" width="10" height="10" fill="#fff" stroke="#2f8ac6" />
        </svg>
      </section>

      <i class="vgrip"></i>

      <aside class="panel">
        <div class="tabs first">
          <div class="tab on" style="width: 85px">アイテム</div>
          <div class="tab" style="width: 84px">編集履歴</div>
        </div>
        <div class="dock"><span>アイテム</span><svg width="12" height="12"><use href="#dock-float" /></svg><svg width="12" height="12"><use href="#dock-close" /></svg></div>
        <div class="tree">
          <div class="thead">
            <div class="c0"><svg width="18" height="14" viewBox="0 0 18 14"><path d="M1.500 7q6.500-7 13.500 0-6.500 6-13.500 0z" fill="#eee" stroke="#999" /><circle cx="8" cy="6.500" r="2.800" fill="#888" /><circle cx="8" cy="6.500" r="1.400" fill="#222" /><path d="M2 4q6-4.500 12.500 0M3 10.500q5 3 10 0" fill="none" stroke="#b5b5b5" /></svg></div>
            <div class="c1"><svg width="14" height="18" viewBox="0 0 14 18"><path d="M3.500 9V6q0-3.500 3.500-3.500T10.500 6v3" fill="none" stroke="#777" stroke-width="2" /><rect x="1" y="8.500" width="12" height="8" rx="1.500" fill="#5f5f5f" /></svg></div>
            <div class="c2">アイテム</div>
          </div>
          <div class="trow"><i class="check on"><svg width="14" height="14"><path d="M4 7l2 4 3.500-8" /></svg></i><i class="check"></i><svg width="16" height="16"><use href="#legend-small" /></svg><b>凡例</b></div>
          <div class="trow"><i class="check on"><svg width="14" height="14"><path d="M4 7l2 4 3.500-8" /></svg></i><i class="check"></i><svg width="16" height="16"><use href="#map-small" /></svg><span>地図 1</span></div>
        </div>
        <div class="splitter"><i></i></div>
        <div class="tabs second">
          <div class="tab" style="width: 100px">レイアウト</div>
          <div class="tab on" style="width: 160px">アイテムプロパティ</div>
          <div class="tab" style="width: 69px">ガイド</div>
        </div>
        <div class="dock two"><span>アイテムプロパティ</span><svg width="12" height="12"><use href="#dock-float" /></svg><svg width="12" height="12"><use href="#dock-close" /></svg></div>
        <div class="heading">凡例</div>
        <div class="scroll">
          <div class="form">
            <div class="gtitle"><i class="tri"></i>主なプロパティ</div>
            <div class="group g1">
              <div class="field"><label>(<u>T</u>)タイトル</label><div class="input"></div>
                <svg class="data-btn" width="24" height="20" viewBox="0 0 24 20"><path d="M6.500 3v14L1 10z" fill="#888" stroke="#666" /><path d="M6.500 2.500h12v15h-12z" fill="#fff" stroke="#888" /><path d="M8.500 6.500h8" stroke="#555" stroke-width="1.600" /><path d="M9 13.500h9" stroke="#777" /><path d="M16.500 13.500h8l-4 4z" fill="#222" /></svg>
              </div>
              <div class="field"><label>タイトルの配置</label><div class="combo">左<i class="arrow"></i></div></div>
              <div class="field"><label>地図</label><div class="combo"><svg width="16" height="16"><use href="#map-small" /></svg><span>地図 1</span><i class="arrow"></i></div></div>
              <div class="field"><label>テキストを包む</label><div class="input"></div></div>
              <div class="checkline"><i class="check on"><svg width="14" height="14"><path d="M4 7l2 4 3.500-8" /></svg></i>大きさを内容に合わせる</div>
            </div>
            <div class="gtitle second"><i class="tri"></i>凡例アイテム</div>
            <div class="group g2">
              <div class="checkline top"><i class="check on"><svg width="14" height="14"><path d="M4 7l2 4 3.500-8" /></svg></i><span>自動更新</span><div class="push">すべて更新</div></div>
              <div class="list">
                <div v-for="it in legendItems" :key="it.text" class="item" :class="{ off: it.off }">
                  <i class="exp"><svg v-if="it.expand" width="6" height="10"><path d="M.5 .5l5 4.500-5 4.500z" fill="#444" /></svg></i>
                  <svg width="16" height="16"><use :href="'#' + it.icon" /></svg><span :style="{ letterSpacing: it.gap + 'px' }">{{ it.text }}</span>
                </div>
              </div>
            </div>
          </div>
          <div class="sbar"><div class="sb"><i class="up"></i></div><div class="thumb"></div><div class="trough"></div><div class="sb low"><i class="down"></i></div></div>
        </div>
      </aside>
    </main>

    <footer class="status">
      <span class="msg">1アイテムが選択されました</span>
      <span class="cx">x: 97.8462 mm</span><span class="cy">y: 188.18 mm</span><span class="cp">page: 2</span>
      <div class="zoombox"><span>63.8%</span><b><i class="arrow"></i></b></div>
      <div class="slider"><i class="done"></i><i class="rail"></i><i class="knob"></i></div>
      <i class="size-grip"></i>
    </footer>
  </div>
</template>

<style>
html, body { margin: 0; overflow: hidden; }
</style>

<style scoped>
* { box-sizing: border-box; }
.window { width: 1506px; height: 958px; display: flex; flex-direction: column; overflow: hidden; position: relative; background: #eeebe7; color: #111; font: 15px/20px "Open Sans", "Noto Sans CJK JP", sans-serif; white-space: nowrap; }
svg { display: block; flex: none; }
i { font-style: normal; display: block; flex: none; }
u { text-underline-offset: 4px; text-decoration-thickness: 1px; }
.sprites { position: absolute; }
.titlebar { height: 24px; flex: none; background: #434343; color: #dcdcdc; font-weight: 700; font-size: 14.500px; display: flex; justify-content: center; align-items: center; position: relative; letter-spacing: .4px; }
.wm { position: absolute; right: 5px; top: 0; }
.menubar { height: 26px; flex: none; display: flex; align-items: center; padding: 0 0 2px 10.500px; border-bottom: 1px solid #cdc9c5; }
.menu { flex: none; }
.accel { letter-spacing: .8px; }
.toolbar { flex: none; display: flex; align-items: center; background: linear-gradient(#f7f4f1, #eeebe6); border-bottom: 1px solid #b5b1ad; border-top: 1px solid #f9f7f5; }
.bar0 { height: 39px; padding-bottom: 2px; }
.bar1 { height: 38px; }
.grip { height: 18px; background: radial-gradient(circle at 1px 1px, #c4c0bc .5px, transparent .9px) 0 0 / 3px 3px; }
.grip.lead { width: 5px; margin: 0 2.400px 0 5px; }
.grip.mid { width: 5px; margin: 0 3px 0 8px; }
.tool { width: 33px; display: flex; justify-content: center; flex: none; }
.tool svg { overflow: visible; }
.ratio { font-size: 8.500px; font-weight: 700; fill: #333; }
.serif-t { font-family: "Liberation Serif", serif; font-size: 12px; fill: #333; }
.sep { width: 1px; height: 19px; margin: 0 3.100px; background: #cfcbc7; }
.pagebox { width: 90px; height: 30px; border: 1px solid #b3afac; border-radius: 3px; display: flex; flex: none; background: #ebe9e6; color: #b9b6b3; overflow: hidden; }
.pagebox span { flex: 1; padding: 4px 4px; border-right: 1px solid #b3afac; }
.pagebox b { width: 19px; background: linear-gradient(#fdfdfc, #efedeb); display: grid; place-items: center; }
.arrow { width: 0; height: 0; border: 4px solid transparent; border-top: 4.500px solid #4a4a4a; border-bottom: 0; }
.arrow.pale { border-top-color: #d6d4d2; }
.body { flex: none; height: 797px; display: flex; }
.toolbox { width: 40px; flex: none; border-right: 1px solid #b5b1ad; background: linear-gradient(90deg, #f8f5f1, #edeae5); }
.hgrip { width: 17px; height: 5px; margin: 6px 0 1.400px 13px; background: radial-gradient(circle at 1px 1px, #c4c0bc .5px, transparent .9px) 0 0 / 3px 3px; }
.slot { height: 32.050px; display: flex; align-items: center; padding-left: 4px; }
.btn { width: 32px; height: 31px; display: grid; place-items: center; }
.btn svg { width: 24px; height: 24px; overflow: visible; }
.btn.on { background: #dedad6; border: 1px solid #b0aca8; border-radius: 3px; }
.view { width: 954px; flex: none; height: 797px; border-bottom: 1px solid #b5b1ad; }
.ticks { fill: #333; }
.ticks text { font-size: 12px; fill: #5a5a5a; }
.lg { font-size: 10px; fill: #222; }
.lg-title { font-size: 14px; fill: #222; }
.road-name { font-size: 21px; fill: #fff; }
.vgrip { width: 2px; height: 17px; margin: 391px 2px 0; background: radial-gradient(circle at 1px 1px, #b8b4b0 .6px, transparent .9px) 0 0 / 3px 3px; }
.panel { width: 506px; flex: none; height: 797px; display: flex; flex-direction: column; }
.tabs { display: flex; align-items: flex-end; border-bottom: 1px solid #b5b1ad; flex: none; box-shadow: 0 1px #faf9f8; }
.tabs.first { height: 33px; }
.tabs.second { height: 33px; }
.tab { height: 29px; flex: none; border: 1px solid #b5b1ad; border-bottom: 0; background: linear-gradient(#dad7d3, #e0ddd9); border-radius: 3px 3px 0 0; display: flex; align-items: center; justify-content: center; }
.tab.on { height: 32px; margin-bottom: -1px; background: linear-gradient(#f7f4f1, #eeebe7); padding-bottom: 1px; position: relative; z-index: 1; padding-right: 2px; }
.tab + .tab { margin-left: -1px; }
.dock { height: 24px; display: flex; align-items: center; padding: 0 1px 0 4px; gap: 2px; flex: none; }
.dock span { flex: 1; }
.tree { height: 189px; flex: none; border: 1px solid #b5b1ad; background: #fff; }
.thead { height: 25px; display: flex; background: linear-gradient(#fbf8f5, #e9e6e3); border-bottom: 1px solid #aeaaa6; }
.thead > div { display: flex; align-items: center; }
.c0 { width: 32px; padding-left: 2px; border-right: 1px solid #ccc8c4; }
.c1 { width: 32px; padding-left: 3px; border-right: 1px solid #ccc8c4; }
.thead > .c2 { padding-left: 3px; }
.trow { height: 21px; display: flex; align-items: center; padding: 0 0 2px 3px; }
.trow .check + .check { margin-left: 18px; }
.trow > svg { margin: 0 6px 0 18px; }
.check { width: 14px; height: 14px; border: 1px solid #b9b5b1; background: #fff; }
.check svg { margin: -1px; }
.check path { fill: none; stroke: #000; stroke-width: 2px; }
.splitter { height: 5px; display: flex; justify-content: center; align-items: center; flex: none; }
.splitter i { width: 17px; height: 3px; background: radial-gradient(circle at 1px 1px, #b8b4b0 .6px, transparent .9px) 0 0 / 3px 3px; }
.heading { height: 26px; flex: none; background: #c8c8c8; border-bottom: 1px solid #b0b0b0; padding: 2px 6px; font-weight: 700; }
.scroll { flex: 1; min-height: 0; display: flex; border: 1px solid #b5b1ad; border-top: 0; }
.form { width: 490px; flex: none; padding: 12px 11px 0 12px; overflow: hidden; }
.gtitle { display: flex; align-items: center; height: 20px; color: #444; font-weight: 700; }
.gtitle.second { margin-top: 7px; }
.tri { border: 6px solid transparent; border-top: 7px solid #3a3a3a; border-bottom: 0; margin: 2px 8px 0 1px; }
.group { border: 1px solid #d5d1cd; border-radius: 2px; background: #ebe8e3; padding: 0 13px 0 12px; }
.g1 { height: 194px; margin-top: 4px; padding-top: 12px; }
.g2 { height: 230px; margin-top: 4px; padding-top: 12px; }
.field { height: 29px; margin-bottom: 6px; display: flex; align-items: center; }
.field label { width: 111px; flex: none; padding-bottom: 1px; }
.input, .combo { flex: 1; height: 29px; border: 1px solid #b1ada9; border-radius: 3px; background: #fff; }
.combo { display: flex; align-items: center; padding: 0 5px 1px 4px; background: linear-gradient(#fefefd, #efedeb); }
.combo svg { margin: 0 3px 0 1px; }
.combo .arrow { margin: 1px 1px 0 auto; }
.data-btn { margin: 0 3px 0 9px; }
.checkline { display: flex; align-items: center; height: 20px; }
.checkline .check { margin-right: 5px; }
.g1 .checkline { margin-top: 9px; }
.checkline.top { height: 28px; }
.checkline.top .check, .checkline.top span { margin-bottom: 2px; }
.push { margin-left: auto; width: 91px; height: 28px; border: 1px solid #c9c5c1; border-radius: 3px; background: linear-gradient(#f7f5f3, #efedea); color: #bbb8b4; display: grid; place-items: center; flex: none; }
.list { margin-top: 6px; height: 170px; border: 1px solid #b1ada9; background: #fff; }
.item { height: 21px; display: flex; align-items: center; font-weight: 700; color: #000; }
.item:first-child { margin-top: -1px; }
.item span { margin-left: 6px; }
.item.off { color: #c1bfbd; }
.exp { width: 17px; margin-left: 6px; }
.sbar { width: 15px; flex: none; border-left: 1px solid #b5b1ad; display: flex; flex-direction: column; }
.sb { height: 14px; background: #f8f6f4; border-bottom: 1px solid #c5c1bd; display: grid; place-items: center; flex: none; }
.sb.low { border-bottom: 0; border-top: 1px solid #c5c1bd; }
.up { border: 4px solid transparent; border-bottom: 4px solid #444; border-top: 0; }
.down { border: 4px solid transparent; border-top: 4px solid #444; border-bottom: 0; }
.thumb { height: 185px; flex: none; background: linear-gradient(90deg, #fdfcfb, #efedea); border-bottom: 1px solid #b5b1ad; }
.trough { flex: 1; background: #e0ddda; }
.status { flex: none; height: 34px; display: flex; align-items: center; padding-left: 6px; position: relative; }
.msg { width: 842px; flex: none; letter-spacing: .14px; }
.cx { width: 109px; flex: none; }
.cy { width: 106px; flex: none; letter-spacing: .08px; }
.cp { width: 106px; flex: none; letter-spacing: .2px; }
.zoombox { width: 207px; height: 29px; flex: none; border: 1px solid #b1ada9; border-radius: 3px; background: #fff; display: flex; overflow: hidden; }
.zoombox span { flex: 1; padding: 3px 3px; letter-spacing: .2px; }
.zoombox b { width: 20px; border-left: 1px solid #b1ada9; background: linear-gradient(#fefefd, #efedeb); display: grid; place-items: center; }
.slider { width: 98px; height: 14px; margin-left: 7px; display: flex; align-items: center; flex: none; }
.done { width: 5px; height: 5px; background: #41a1e0; border: 1px solid #2c7ab0; border-radius: 2px 0 0 2px; }
.knob { order: 2; width: 13px; height: 13px; background: #faf9f8; border: 1px solid #a9a5a1; border-radius: 3px; }
.rail { order: 3; flex: 1; height: 5px; background: #dedbd8; border: 1px solid #b1ada9; border-radius: 0 2px 2px 0; }
.size-grip { position: absolute; right: 1px; bottom: 2px; width: 11px; height: 11px; background: radial-gradient(circle at 1px 1px, #b8b4b0 .6px, transparent .9px) 0 0 / 3px 3px; clip-path: polygon(100% 0, 100% 100%, 0 100%); }
</style>
